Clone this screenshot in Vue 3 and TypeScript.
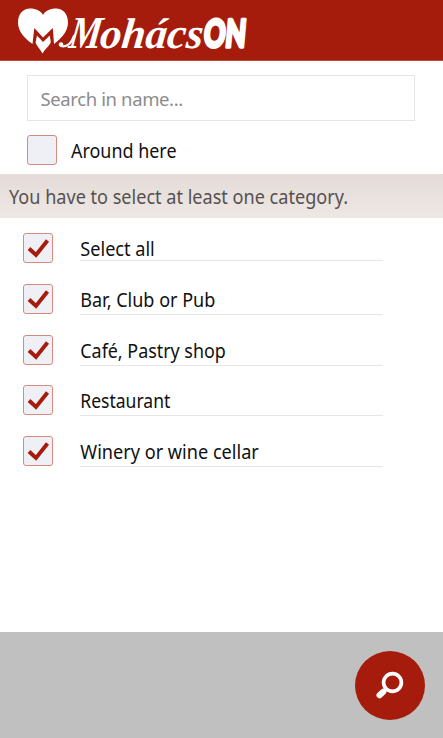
<script setup lang="ts">
import { ref, computed } from 'vue'

interface Category {
  name: string
  width: number
  checked: boolean
}

const query = ref('')
const aroundHere = ref(false)
const categories = ref<Category[]>([
  { name: 'Select all', width: 74.5, checked: true },
  { name: 'Bar, Club or Pub', width: 135, checked: true },
  { name: 'Café, Pastry shop', width: 145.5, checked: true },
  { name: 'Restaurant', width: 90, checked: true },
  { name: 'Winery or wine cellar', width: 178.5, checked: true },
])
const allChecked = computed(() => categories.value.slice(1).every((c) => c.checked))

function toggle(index: number) {
  if (index === 0) {
    const next = !categories.value[0].checked
    categories.value.forEach((c) => (c.checked = next))
  } else {
    categories.value[index].checked = !categories.value[index].checked
    categories.value[0].checked = allChecked.value
  }
}
</script>

<template>
  <div class="screen">
    <header class="header">
      <svg class="logo" width="300" height="60" viewBox="0 0 300 60">
        <path
          fill="#fff"
          d="M32.500 44 C24 38 18 31 18 22.500 C18 14 23 8.500 30 8.500 C36 8.500 41 11 43 15 C45 11 50 8.500 56 8.500 C63 8.500 68 14 68 22.500 C68 31 62 38 54 44 L52.800 28 L43 37.500 L34.300 28 Z"
        />
        <path fill="#fff" d="M37 35.500 L43 42 L49.800 35.500 L50.800 42 C49.500 46 45 49 42.500 53.500 C40 49 37 46.500 35.500 42.500 Z" />
        <path fill="none" stroke="#fff" stroke-width="2.200" stroke-linecap="round" d="M74 36 C71 44 66 47.500 61 46" />
        <circle cx="61" cy="44.500" r="2.300" fill="#fff" />
        <text class="brand capital" transform="translate(68 47.500) skewX(-8)" textLength="32" lengthAdjust="spacingAndGlyphs">M</text>
        <text class="brand" transform="translate(99 47.500) skewX(-6)" textLength="103" lengthAdjust="spacingAndGlyphs">ohács</text>
        <text class="brand-on" transform="translate(203 46.500) skewX(-5)" textLength="42" lengthAdjust="spacingAndGlyphs">ON</text>
      </svg>
    </header>

    <div class="filters">
      <input v-model="query" class="search" type="text" placeholder="Search in name..." />
      <div class="around" @click="aroundHere = !aroundHere">
        <span class="box">
          <svg v-if="aroundHere" width="28" height="28" viewBox="0 0 28 28"><path class="tick" d="M5 14.500 L12 21 L23.500 6.500" /></svg>
        </span>
        <svg class="label" width="150" height="30">
          <text x="0" y="22.500" textLength="105.500" lengthAdjust="spacingAndGlyphs">Around here</text>
        </svg>
      </div>
    </div>

    <div class="notice">
      <svg class="label" width="430" height="43">
        <text x="0" y="29.500" textLength="339" lengthAdjust="spacingAndGlyphs">You have to select at least one category.</text>
      </svg>
    </div>

    <ul class="list">
      <li v-for="(item, i) in categories" :key="item.name" class="row" @click="toggle(i)">
        <span class="box">
          <svg v-if="item.checked" width="28" height="28" viewBox="0 0 28 28"><path class="tick" d="M5 14.500 L12 21 L23.500 6.500" /></svg>
        </span>
        <span class="name" :class="{ first: i === 0 }">
          <svg class="label" width="303" height="27">
            <text x="0.300" y="22.900" :textLength="item.width" lengthAdjust="spacingAndGlyphs">{{ item.name }}</text>
          </svg>
        </span>
      </li>
    </ul>

    <footer class="footer">
      <button class="fab" type="button" aria-label="Search">
        <svg width="69" height="69" viewBox="0 0 69 69">
          <circle cx="37.500" cy="31.500" r="8.900" fill="none" stroke="#fff" stroke-width="3.700" />
          <path d="M31.500 37.500 L28 41" stroke="#fff" stroke-width="3.500" />
          <path d="M28.300 40.700 L24.500 44.300" stroke="#fff" stroke-width="6" stroke-linecap="round" />
        </svg>
      </button>
    </footer>
  </div>
</template>

<style>
body {
  margin: 0;
  background: #fff;
}
</style>

<style scoped>
.screen {
  width: 443px;
  height: 738px;
  display: flex;
  flex-direction: column;
  overflow: hidden;
  background: #fff;
  color: #111;
  font-family: 'Noto Sans', 'Open Sans', sans-serif;
}
.header {
  height: 61px;
  flex: none;
  box-sizing: border-box;
  background: #a61c0c;
  border-bottom: 1px solid #b84a36;
}
.logo {
  display: block;
  overflow: visible;
}
.brand {
  font: italic bold 43px 'Liberation Serif', serif;
  fill: #fff;
}
.capital {
  font-size: 46px;
}
.brand-on {
  font: 900 38px Lato, sans-serif;
  fill: #fff;
  stroke: #fff;
  stroke-width: 3.4px;
  stroke-linejoin: round;
}
.filters {
  height: 113px;
  flex: none;
  box-sizing: border-box;
  padding: 14px 28px 0 27px;
}
.search {
  display: block;
  box-sizing: border-box;
  width: 388px;
  height: 46px;
  margin: 0;
  padding: 0 12px 0 12.5px;
  border: 1.5px solid #e5e5e5;
  outline: none;
  background: #fff;
  color: #111;
  font: 18.5px 'Noto Sans', 'Open Sans', sans-serif;
  letter-spacing: -0.38px;
}
.search::placeholder {
  color: #8c8c8c;
  opacity: 1;
}
.around {
  display: flex;
  gap: 14px;
  margin-top: 13.5px;
}
.box {
  flex: none;
  box-sizing: border-box;
  width: 30px;
  height: 30px;
  border: 1px solid #da8980;
  border-radius: 3px;
  background: #eff0f5;
}
.box svg {
  display: block;
}
.tick {
  fill: none;
  stroke: #a61c0c;
  stroke-width: 3.9;
}
.label {
  display: block;
  overflow: visible;
  font-size: 19px;
  fill: currentColor;
}
.notice {
  height: 43.5px;
  flex: none;
  box-sizing: border-box;
  padding-left: 9px;
  background: linear-gradient(#e4dbd8, #eee8e5);
  color: #555150;
}
.list {
  flex: 1;
  margin: 0;
  padding: 15.5px 0 0 23px;
  list-style: none;
}
.row {
  display: flex;
  gap: 27px;
  height: 50.8px;
}
.name {
  box-sizing: border-box;
  width: 303px;
  height: 31px;
  border-bottom: 1.5px solid #e6e6e6;
}
.name.first {
  height: 28px;
}
.footer {
  flex: none;
  box-sizing: border-box;
  height: 106px;
  padding: 19px 18px 0 0;
  display: flex;
  justify-content: flex-end;
  background: #c0c0c0;
}
.fab {
  width: 70px;
  height: 69px;
  padding: 0;
  border: 0;
  border-radius: 50%;
  background: #a61c0c;
}
.fab svg {
  display: block;
}
</style>
